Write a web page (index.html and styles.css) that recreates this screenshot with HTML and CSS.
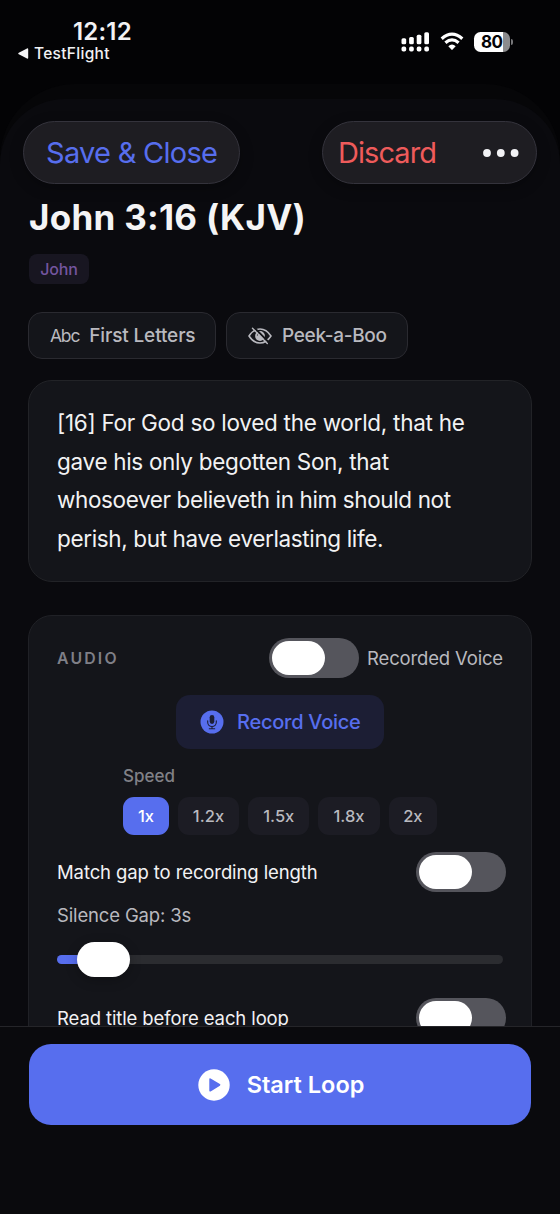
FILE: index.html
```html
<!DOCTYPE html>
<html lang="en">
<head>
<meta charset="utf-8">
<title>John 3:16 (KJV)</title>
<link rel="stylesheet" href="styles.css">
</head>
<body>
<div class="phone">
  <header class="status">
    <div class="status-left">
      <div class="clock">12:12</div>
      <div class="back"><svg width="11" height="11" viewBox="0 0 11 11"><path d="M0.8 4.7 9 .5q1.2-.5 1.2.7v8.6q0 1.2-1.2.7L.8 6.3q-1.2-.8 0-1.6Z" fill="#f4f4f6"/></svg><span class="back-label">TestFlight</span></div>
    </div>
    <div class="status-right">
      <svg class="signal" width="29" height="21" viewBox="0 0 29 21" fill="#fff"><rect x="0.5" y="6.3" width="4.700" height="5.900" rx="1.500"/><rect x="8.100" y="5" width="4.700" height="7.200" rx="1.500"/><rect x="15.700" y="2.700" width="4.700" height="9.500" rx="1.500"/><rect x="23.300" y="0.300" width="4.700" height="11.900" rx="1.500"/><rect x="0.500" y="14.600" width="4.700" height="5" rx="1.800"/><rect x="8.100" y="14.600" width="4.700" height="5" rx="1.800"/><rect x="15.700" y="14.600" width="4.700" height="5" rx="1.800"/><rect x="23.300" y="14.600" width="4.700" height="5" rx="1.800"/></svg>
      <svg class="wifi" width="24" height="19" viewBox="0 0 24 19"><path d="M1.700 6.700Q12-2.400 22.300 6.700" fill="none" stroke="#fff" stroke-width="3.300"/><path d="M5.400 10.800Q12 5 18.600 10.800" fill="none" stroke="#fff" stroke-width="3.200"/><path d="M8.300 14.200Q12 11 15.700 14.200L12.600 17.600Q12 18.200 11.400 17.600Z" fill="#fff"/></svg>
      <div class="battery"><span class="battery-body"><span class="battery-num">80</span></span><span class="battery-cap"></span></div>
    </div>
  </header>
  <div class="backsheet">
    <div class="sheet">
      <nav class="toolbar">
        <div class="pill pill-save"><span class="save">Save &amp; Close</span></div>
        <div class="pill pill-more"><span class="discard">Discard</span><svg width="36" height="8" viewBox="0 0 36 8" fill="#f2f2f5"><circle cx="4" cy="4" r="3.900"/><circle cx="17.800" cy="4" r="3.900"/><circle cx="31.600" cy="4" r="3.900"/></svg></div>
      </nav>
      <main class="content">
        <h1 class="title">John 3:16 (KJV)</h1>
        <div class="tag"><span class="tag-label">John</span></div>
        <div class="modes">
          <div class="mode mode-letters"><span class="abc">Abc</span><span class="letters-label">First Letters</span></div>
          <div class="mode mode-peek"><svg width="24" height="18" viewBox="0 0 24 18" fill="none" stroke="#b9b9bf"><path d="M1 9Q5.500 2 12 2T23 9Q18.500 16 12 16T1 9Z" stroke-width="1.500"/><circle cx="12" cy="9" r="4.900" fill="#b9b9bf" stroke="none"/><path d="M9.400 8.500Q9.600 6.300 11.800 6" stroke="#15161a" stroke-width="1"/><path d="M5.700 .1 20.600 15.300" stroke="#15161a" stroke-width="2"/><path d="M4.500 1.300 19.300 16.500" stroke-width="1.400" stroke-linecap="round"/></svg><span class="peek-label">Peek-a-Boo</span></div>
        </div>
        <section class="verse">
          <div class="v1">[16] For God so loved the world, that he</div>
          <div class="v2">gave his only begotten Son, that</div>
          <div class="v3">whosoever believeth in him should not</div>
          <div class="v4">perish, but have everlasting life.</div>
        </section>
        <section class="audio">
          <div class="audio-head">
            <span class="audio-title">AUDIO</span>
            <div class="voice"><span class="toggle"><span class="knob"></span></span><span class="voice-label">Recorded Voice</span></div>
          </div>
          <div class="record"><svg width="24" height="24" viewBox="0 0 24 24"><circle cx="12" cy="12" r="11.500" fill="#576eee"/><rect x="9.700" y="4.900" width="4.600" height="9" rx="2.300" fill="#1c1e34"/><path d="M7.700 10.800v1.400a4.300 4.300 0 0 0 8.600 0v-1.400M12 16.500v2.100M9.300 18.700h5.400" fill="none" stroke="#1c1e34" stroke-width="1.100" stroke-linecap="round"/></svg><span class="record-label">Record Voice</span></div>
          <div class="speed">
            <div class="speed-label">Speed</div>
            <div class="speeds"><span class="sp sp-on">1x</span><span class="sp">1.2x</span><span class="sp">1.5x</span><span class="sp sp-wide">1.8x</span><span class="sp sp-two">2x</span></div>
          </div>
          <div class="row"><span class="match-label">Match gap to recording length</span><span class="toggle"><span class="knob"></span></span></div>
          <div class="gap-label">Silence Gap: 3s</div>
          <div class="slider"><div class="fill"></div><div class="thumb"></div><div class="track"></div></div>
          <div class="row row-last"><span class="read-label">Read title before each loop</span><span class="toggle"><span class="knob"></span></span></div>
        </section>
      </main>
      <footer class="footer">
        <div class="start"><svg width="32" height="32" viewBox="0 0 32 32"><circle cx="16" cy="16" r="15.700" fill="#fff"/><path d="M11.300 10.200q0-1.500 1.300-.8l9.300 5.700q1.100.8 0 1.600l-9.300 5.700q-1.300.7-1.300-.8Z" fill="#576eee"/></svg><span class="start-label">Start Loop</span></div>
      </footer>
    </div>
  </div>
</div>
</body>
</html>
```
FILE: styles.css
```css
* { box-sizing: border-box; }
body { margin: 0; background: #030305; font-family: Inter, "Liberation Sans", sans-serif; color: #f2f2f4; white-space: nowrap; }
svg { display: block; flex: none; }
.phone { width: 560px; height: 1214px; overflow: hidden; display: flex; flex-direction: column; background: #030305; }
.status { height: 84px; flex: none; display: flex; justify-content: space-between; padding: 20px 47px 0 18px; }
.clock { font-size: 24px; font-weight: 600; line-height: 24px; letter-spacing: .2px; padding-left: 55px; }
.back { display: flex; align-items: center; gap: 5px; height: 19px; }
.back-label { font-size: 15.500px; font-weight: 500; line-height: 20px; letter-spacing: .3px; }
.status-right { display: flex; align-items: flex-start; padding-top: 12px; }
.wifi { margin-left: 10px; }
.battery { display: flex; align-items: center; margin-left: 10px; }
.battery-body { width: 36px; height: 20px; border-radius: 6.500px; background: linear-gradient(90deg, #fff 29px, #8b8b8d 29px); display: block; color: #050507; font-size: 17px; font-weight: 700; line-height: 20px; padding-left: 7px; }
.battery-num { letter-spacing: -.5px; }
.battery-cap { width: 2px; height: 6px; margin-left: 1px; border-radius: 0 3px 3px 0; background: #77777a; }
.backsheet { flex: 1; padding-top: 15px; background: #060608; border-radius: 75px 75px 0 0; min-height: 0; }
.sheet { height: 1115px; background: #0a0a0e; border-radius: 65px 65px 0 0; display: flex; flex-direction: column; }
.toolbar { height: 85px; flex: none; display: flex; justify-content: space-between; padding: 22px 23px 0; }
.pill { height: 63px; border-radius: 32px; background: #1e1d22; border: 1.500px solid #34333c; display: flex; align-items: center; box-shadow: 0 4px 14px rgba(0,0,0,.25); }
.pill-save { width: 217px; padding-left: 22px; }
.pill-more { width: 215px; padding-right: 17px; padding-left: 15px; justify-content: space-between; }
.save { color: #576eee; font-size: 29px; letter-spacing: -.72px; }
.discard { color: #ee5b5b; font-size: 29px; letter-spacing: -.95px; }
.content { height: 842px; flex: none; overflow: hidden; padding: 9px 28px 0; }
.title { margin: 0 0 0 1px; font-size: 35px; font-weight: 700; line-height: 48px; letter-spacing: .27px; color: #f4f4f5; }
.tag { width: 60px; height: 30px; margin: 13px 0 0 1px; border-radius: 8px; background: #181621; display: flex; align-items: center; justify-content: center; }
.tag-label { font-size: 16px; font-weight: 500; letter-spacing: -.2px; color: #74559f; }
.modes { display: flex; gap: 10px; margin-top: 28px; }
.mode { height: 47px; border-radius: 14px; background: #14151a; border: 1.500px solid #2a2a30; display: flex; align-items: center; color: #b9b9bf; font-size: 19px; font-weight: 500; }
.mode-letters { width: 188px; padding-left: 21px; gap: 10px; }
.mode-peek { width: 182px; padding-left: 21px; gap: 10px; }
.abc { font-size: 17.500px; font-weight: 400; letter-spacing: -1.200px; }
.letters-label { letter-spacing: -.13px; }
.peek-label { letter-spacing: -.32px; }
.verse { height: 202px; margin-top: 21px; padding: 23px 28px 0; border-radius: 24px; background: #14151a; border: 1.500px solid #222327; font-size: 22.500px; line-height: 38.500px; color: #f2f2f3; }
.v1 { letter-spacing: -.27px; }
.v2 { letter-spacing: -.31px; }
.v3 { letter-spacing: -.38px; }
.v4 { letter-spacing: -.36px; }
.audio { height: 600px; margin-top: 33px; padding: 22px 28px 0; border-radius: 24px; background: #14151a; border: 1.500px solid #202126; }
.audio-head { height: 40px; display: flex; justify-content: space-between; align-items: center; }
.audio-title { font-size: 15.800px; font-weight: 600; letter-spacing: 2.200px; color: #7f7f87; }
.voice { display: flex; align-items: center; gap: 8px; }
.voice-label { font-size: 18.500px; letter-spacing: -.16px; color: #b9b9bf; }
.toggle { width: 90px; height: 40px; border-radius: 20px; background: #55555c; padding: 3px; display: block; flex: none; }
.knob { display: block; width: 53px; height: 34px; border-radius: 17px; background: #fff; }
.record { width: 208px; height: 54px; margin: 17px auto 0; border-radius: 14px; background: #1c1e34; display: flex; align-items: center; gap: 13px; padding-left: 24px; color: #576eee; font-size: 20px; font-weight: 500; letter-spacing: -.25px; }
.speed { width: 314px; margin: 15px auto 0; }
.speed-label { font-size: 17px; font-weight: 500; line-height: 25px; color: #818187; }
.speeds { display: flex; gap: 9px; margin-top: 8px; }
.sp { width: 61.500px; height: 38px; border-radius: 11px; background: #1c1c24; color: #b9b9bf; font-size: 16.500px; font-weight: 500; line-height: 38px; text-align: center; }
.sp-on { width: 46px; background: #576eee; color: #fff; }
.sp-two { width: 48.500px; }
.row { display: flex; justify-content: space-between; align-items: center; height: 40px; margin: 17px -3px 0 0; font-size: 18.500px; letter-spacing: -.11px; }
.gap-label { font-size: 18.500px; line-height: 24px; margin-top: 11px; letter-spacing: -.15px; color: #b9b9bf; }
.slider { height: 35px; margin-top: 15px; display: flex; align-items: center; }
.fill { width: 24px; height: 9px; margin-right: -4px; border-radius: 5px; background: #576eee; }
.thumb { width: 53px; height: 35px; border-radius: 18px; background: #fff; box-shadow: 0 3px 12px rgba(0,0,0,.25); z-index: 1; }
.track { flex: 1; height: 9px; margin-left: -4px; border-radius: 0 5px 5px 0; background: #2b2c30; }
.row-last { margin-top: 21px; }
.footer { flex: 1; border-top: 1px solid #252529; padding: 17px 29px 0; background: #0a0a0d; }
.start { height: 81px; border-radius: 22px; background: #576eee; display: flex; align-items: center; justify-content: center; gap: 17px; padding-left: 2px; }
.start-label { font-size: 23.500px; font-weight: 600; color: #fff; }
```
